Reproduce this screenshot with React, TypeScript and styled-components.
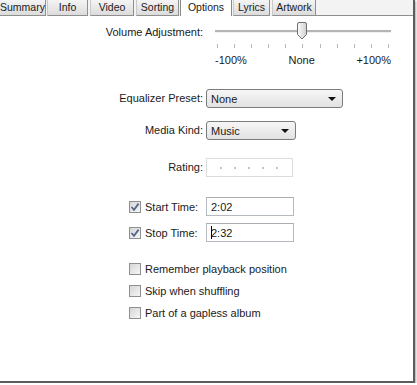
import styled, { createGlobalStyle } from "styled-components"

const GlobalStyle = createGlobalStyle`
  html, body {
    margin: 0;
    background: #ffffff;
  }
  body {
    font-family: "Liberation Sans", Arial, sans-serif;
    font-size: 11px;
    color: #1a1a1a;
  }
`

const tabs = [
  { label: "Summary", width: 46, offset: 0, first: true },
  { label: "Info", width: 41, offset: 1 },
  { label: "Video", width: 44, offset: 2 },
  { label: "Sorting", width: 43, offset: 2 },
  { label: "Options", width: 52, offset: 1, selected: true },
  { label: "Lyrics", width: 37, offset: 1 },
  { label: "Artwork", width: 44, offset: 2 },
]

const Check = ({ checked }: { checked?: boolean }) => (
  <CheckBox>
    {checked && (
      <svg width="10" height="10" viewBox="0 0 10 10">
        <path
          d="M1.5 5 L4 7.8 L8.6 1.6"
          fill="none"
          stroke="#56668c"
          strokeWidth="1.8"
        />
      </svg>
    )}
  </CheckBox>
)

const Thumb = () => (
  <ThumbWrap>
    <svg width="10" height="18" viewBox="0 0 10 18">
      <defs>
        <linearGradient id="thumbFill" x1="0" y1="0" x2="1" y2="0">
          <stop offset="0" stopColor="#fbfbfb" />
          <stop offset="1" stopColor="#cfcfcf" />
        </linearGradient>
      </defs>
      <path
        d="M2 0.5 H8 Q9.5 0.5 9.5 2 V12.5 L5 17 L0.5 12.5 V2 Q0.5 0.5 2 0.5 Z"
        fill="url(#thumbFill)"
        stroke="#6f6f6f"
      />
    </svg>
  </ThumbWrap>
)

const App = () => {
  return (
    <>
      <GlobalStyle />
      <Frame>
        <TabBar>
          {tabs.map((t) => (
            <Tab
              key={t.label}
              $width={t.width}
              $offset={t.offset}
              $selected={!!t.selected}
              $first={!!t.first}
            >
              {t.label}
            </Tab>
          ))}
          <TabFiller />
        </TabBar>

        <Row $top={6} $height={44}>
          <Label $line={14} $pad={3}>
            Volume Adjustment:
          </Label>
          <Slider>
            <Track>
              <Thumb />
            </Track>
            <Ticks>
              {Array.from({ length: 11 }).map((_, i) => (
                <Tick key={i} />
              ))}
            </Ticks>
            <SliderLabels>
              <span>-100%</span>
              <span>None</span>
              <span>+100%</span>
            </SliderLabels>
          </Slider>
        </Row>

        <Row $top={23} $height={19}>
          <Label $line={19}>Equalizer Preset:</Label>
          <Select $width={137}>
            None
            <Arrow />
          </Select>
        </Row>

        <Row $top={13} $height={19}>
          <Label $line={19}>Media Kind:</Label>
          <Select $width={90}>
            Music
            <Arrow />
          </Select>
        </Row>

        <Row $top={18} $height={19}>
          <Label $line={19}>Rating:</Label>
          <Rating>
            {Array.from({ length: 5 }).map((_, i) => (
              <Dot key={i} />
            ))}
          </Rating>
        </Row>

        <TimeRow $top={20}>
          <CheckLabel>
            <Check checked />
            Start Time:
          </CheckLabel>
          <TextField>2:02</TextField>
        </TimeRow>

        <TimeRow $top={7}>
          <CheckLabel>
            <Check checked />
            Stop Time:
          </CheckLabel>
          <TextField>
            <Caret />
            2:32
          </TextField>
        </TimeRow>

        <OptionRow $top={19}>
          <Check />
          Remember playback position
        </OptionRow>
        <OptionRow $top={6}>
          <Check />
          Skip when shuffling
        </OptionRow>
        <OptionRow $top={6}>
          <Check />
          Part of a gapless album
        </OptionRow>
      </Frame>
    </>
  )
}

const Frame = styled.div`
  box-sizing: border-box;
  width: 415px;
  height: 383px;
  overflow: hidden;
  display: flex;
  flex-direction: column;
  background: #ffffff;
  border-right: 2px solid #5c5c5c;
  border-bottom: 2px solid #5c5c5c;
  box-shadow: 1px 1px 2px rgba(0, 0, 0, 0.35);
`

const TabBar = styled.div`
  display: flex;
  height: 16px;
  flex-shrink: 0;
  background: #f3f3f3;
`

const Tab = styled.div<{
  $width: number
  $offset: number
  $selected: boolean
  $first: boolean
}>`
  box-sizing: border-box;
  flex-shrink: 0;
  width: ${(p) => p.$width}px;
  margin-left: ${(p) => p.$offset}px;
  display: flex;
  justify-content: ${(p) => (p.$first ? "flex-start" : "center")};
  align-items: flex-start;
  font-size: 10.5px;
  line-height: 14px;
  white-space: nowrap;
  color: #1a1a1a;
  border-left: ${(p) =>
    p.$first ? "none" : `1px solid ${p.$selected ? "#8a8a8a" : "#c9c9c9"}`};
  border-right: 1px solid ${(p) => (p.$selected ? "#8a8a8a" : "#8f8f8f")};
  border-bottom: ${(p) => (p.$selected ? "none" : "1px solid #8f8f8f")};
  background: ${(p) =>
    p.$selected ? "#ffffff" : "linear-gradient(#f4f4f4, #dcdcdc)"};
`

const TabFiller = styled.div`
  flex: 1;
  border-bottom: 1px solid #8f8f8f;
`

const Row = styled.div<{ $top: number; $height: number }>`
  display: flex;
  align-items: flex-start;
  margin-top: ${(p) => p.$top}px;
  height: ${(p) => p.$height}px;
  flex-shrink: 0;
`

const Label = styled.div<{ $line: number; $pad?: number }>`
  width: 203px;
  flex-shrink: 0;
  text-align: right;
  line-height: ${(p) => p.$line}px;
  padding-top: ${(p) => p.$pad ?? 0}px;
  margin-right: 3px;
  white-space: nowrap;
`

const Slider = styled.div`
  margin-left: 9px;
  width: 176px;
  display: flex;
  flex-direction: column;
`

const Track = styled.div`
  position: relative;
  height: 19px;
  display: flex;
  align-items: center;
  &::before {
    content: "";
    flex: 1;
    height: 2px;
    background: #b4b4b4;
    border-bottom: 1px solid #f0f0f0;
  }
`

const ThumbWrap = styled.div`
  position: absolute;
  left: 82px;
  top: 0;
  height: 18px;
`

const Ticks = styled.div`
  display: flex;
  justify-content: space-between;
  padding: 3px 2px 0;
  height: 4px;
`

const Tick = styled.div`
  width: 1px;
  height: 4px;
  background: #b8b8b8;
`

const SliderLabels = styled.div`
  display: flex;
  justify-content: space-between;
  margin-top: 6px;
  line-height: 13px;
`

const Select = styled.div<{ $width: number }>`
  box-sizing: border-box;
  width: ${(p) => p.$width}px;
  height: 19px;
  display: flex;
  align-items: center;
  justify-content: space-between;
  padding: 0 6px 0 4px;
  border: 1px solid #7b7b7b;
  border-radius: 3px;
  background: linear-gradient(#f6f6f6, #e2e2e2);
`

const Arrow = styled.span`
  width: 0;
  height: 0;
  border-left: 4px solid transparent;
  border-right: 4px solid transparent;
  border-top: 4px solid #111111;
`

const Rating = styled.div`
  box-sizing: border-box;
  width: 87px;
  height: 19px;
  border: 1px solid #dcdcdc;
  display: flex;
  align-items: center;
  gap: 12px;
  padding-left: 13px;
`

const Dot = styled.span`
  width: 2px;
  height: 2px;
  background: #c4c4c4;
`

const TimeRow = styled.div<{ $top: number }>`
  display: flex;
  align-items: center;
  margin-top: ${(p) => p.$top}px;
  height: 19px;
  padding-left: 129px;
  flex-shrink: 0;
`

const CheckLabel = styled.div`
  width: 77px;
  flex-shrink: 0;
  display: flex;
  align-items: center;
  gap: 4px;
`

const CheckBox = styled.span`
  box-sizing: border-box;
  width: 12px;
  height: 12px;
  flex-shrink: 0;
  display: inline-flex;
  align-items: center;
  justify-content: center;
  border: 1px solid #8e8f8f;
  background: linear-gradient(135deg, #d6d6d6, #f6f6f6);
`

const TextField = styled.div`
  box-sizing: border-box;
  width: 88px;
  height: 19px;
  display: flex;
  align-items: center;
  padding-left: 4px;
  border: 1px solid #b5b9c0;
  border-top-color: #abadb3;
  background: #ffffff;
`

const Caret = styled.span`
  width: 1px;
  height: 13px;
  background: #000000;
  margin-right: -1px;
`

const OptionRow = styled.div<{ $top: number }>`
  display: flex;
  align-items: center;
  gap: 4px;
  margin-top: ${(p) => p.$top}px;
  height: 16px;
  padding-left: 129px;
  flex-shrink: 0;
`

export default App
